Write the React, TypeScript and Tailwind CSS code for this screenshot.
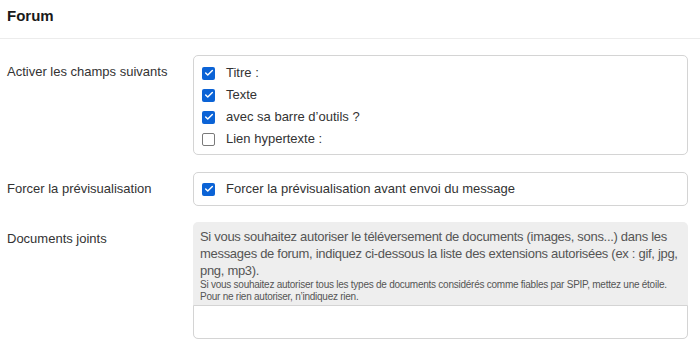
import { Check } from "lucide-react";

const Box = ({ checked, label }: { checked: boolean; label: string }) => (
  <label className="flex items-center gap-[11px] h-[22px]">
    {checked ? (
      <span className="flex h-[13px] w-[13px] items-center justify-center rounded-[2px] bg-[#0b63d6]">
        <Check size={10} strokeWidth={3.5} className="text-white" />
      </span>
    ) : (
      <span className="h-[13px] w-[13px] rounded-[2px] border border-[#7a7a7a] bg-white" />
    )}
    <span>{label}</span>
  </label>
);

const Row = ({ label, children, className }: { label: string; children: React.ReactNode; className?: string }) => (
  <div className={"flex " + (className ?? "")}>
    <div className="w-[193px] shrink-0 pl-[7px]">{label}</div>
    <div className="flex-1">{children}</div>
  </div>
);

export default function App() {
  return (
    <div className="h-[346px] w-[700px] overflow-hidden bg-white text-[13px] text-[#333] font-['Liberation_Sans',Arial,sans-serif] pr-[12px]">
      <div className="h-[39px] border-b border-[#ececec] -mr-[12px] pl-[7px] pt-[5px]">
        <h2 className="text-[15px] font-bold text-[#1a1a1a]">Forum</h2>
      </div>

      <Row label="Activer les champs suivants" className="mt-[16px] leading-[22px] [&>div:first-child]:pt-[6px]">
        <div className="h-[100px] rounded-[5px] border border-[#d4d4d4] px-[8px] pt-[6px]">
          <Box checked label="Titre :" />
          <Box checked label="Texte" />
          <Box checked label="avec sa barre d’outils ?" />
          <Box checked={false} label="Lien hypertexte :" />
        </div>
      </Row>

      <Row label="Forcer la prévisualisation" className="mt-[17px] items-center">
        <div className="flex h-[34px] items-center rounded-[5px] border border-[#d4d4d4] px-[8px]">
          <Box checked label="Forcer la prévisualisation avant envoi du message" />
        </div>
      </Row>

      <Row label="Documents joints" className="mt-[16px] leading-[34px]">
        <div className="rounded-[5px] bg-[#eeeeee]">
          <div className="px-[7px] pt-[6px] pb-[2px] text-[#555]">
            <p className="text-[13px] leading-[17px] tracking-[-0.3px]">
              Si vous souhaitez autoriser le téléversement de documents (images, sons...) dans les messages de forum, indiquez ci-dessous la liste des extensions autorisées (ex : gif, jpg, png, mp3).
            </p>
            <p className="text-[10px] leading-[12px] tracking-[-0.25px]">
              Si vous souhaitez autoriser tous les types de documents considérés comme fiables par SPIP, mettez une étoile.
              <br />
              Pour ne rien autoriser, n’indiquez rien.
            </p>
          </div>
          <div className="h-[34px] rounded-b-[5px] border border-[#d4d4d4] bg-white" />
        </div>
      </Row>
    </div>
  );
}
